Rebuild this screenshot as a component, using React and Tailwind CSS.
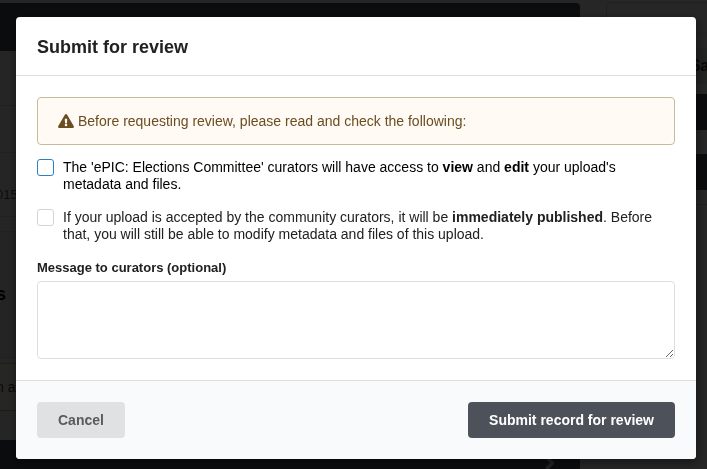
import { useState } from 'react';
import { ChevronRight } from 'lucide-react';

const WarningIcon = () => (
  <svg className="h-[14px] w-4 shrink-0" viewBox="0 0 576 512" fill="currentColor" aria-hidden="true">
    <path d="M569.517 440.013C587.975 472.007 564.806 512 527.94 512H48.054c-36.937 0-59.999-40.055-41.577-71.987L246.423 23.985c18.467-32.009 64.72-31.951 83.154 0l239.94 416.028zM288 354c-25.405 0-46 20.595-46 46s20.595 46 46 46 46-20.595 46-46-20.595-46-46-46zm-43.673-165.346l7.418 136c.347 6.364 5.609 11.346 11.982 11.346h48.546c6.373 0 11.635-4.982 11.982-11.346l7.418-136c.375-6.874-5.098-12.654-11.982-12.654h-63.383c-6.884 0-12.356 5.78-11.981 12.654z" />
  </svg>
);

const Checkbox = ({ id, checked, onChange, className, boxClassName, children }) => (
  <div className={`flex items-start gap-[9px] leading-[17px] ${className}`}>
    <input
      id={id}
      type="checkbox"
      checked={checked}
      onChange={onChange}
      className={`h-[17px] w-[17px] shrink-0 appearance-none rounded-[3px] border bg-white outline-none checked:bg-[#4d515a] ${boxClassName}`}
    />
    <label htmlFor={id}>{children}</label>
  </div>
);

// Upload form that stays visible behind the dimmer
const UploadPage = () => (
  <div className="flex h-screen overflow-hidden bg-white text-black" aria-hidden="true">
    <div className="flex w-[82%] shrink-0 flex-col pt-[3px]">
      <div className="h-12 shrink-0 rounded-tr bg-[#4d515a]" />
      <div className="flex grow flex-col bg-[#f8f8f8]">
        <div className="h-[55px] border-b border-[#d4d4d5]" />
        <div className="h-[47px] border-b border-[#d4d4d5]" />
        <div className="h-16 border-b border-[#d4d4d5] pt-[34px] text-[13px] leading-4 text-[#555]">
          <span className="-ml-1">0155</span>
        </div>
        <div className="mt-[14px] h-[127px] border-y border-[#d4d4d5] bg-[#eeeeee] pt-[50px] text-lg leading-6 font-bold">
          <span className="-ml-1">s</span>
        </div>
        <div className="mt-[5px] h-12 border-y border-[#c9ba9b] bg-[#fffaf3] pt-[15px] text-sm leading-4 text-[#573a08]">
          <span className="-ml-1">n a</span>
        </div>
      </div>
      <div className="flex h-[29px] shrink-0 items-end justify-end bg-[#4d515a] pr-5 text-[#e0e1e2]">
        <ChevronRight className="-mb-1 h-5 w-5" strokeWidth={4} />
      </div>
    </div>
    <div className="ml-[26px] flex grow flex-col">
      <div className="mt-[2px] h-[203px] rounded-tl border-b border-l border-t border-[#d4d4d5]">
        <div className="h-[31px] border-b border-[#e8e8e8]" />
        <div className="mt-[14px] flex h-9 items-center justify-end overflow-hidden bg-[#e0e8e6] text-base font-bold text-[#333]">
          <span className="-mr-5">Save</span>
        </div>
        <div className="mt-[10px] h-9 bg-[#4d515a]" />
        <div className="mt-6 h-9 bg-[#4d515a]" />
      </div>
    </div>
  </div>
);

const App = () => {
  const [access, setAccess] = useState(false);
  const [published, setPublished] = useState(false);
  const [message, setMessage] = useState('');

  return (
    <div className="font-['Liberation_Sans',Arial,sans-serif] text-sm">
      <UploadPage />

      <div className="fixed inset-0 overflow-hidden bg-black/85 pt-[17px] pr-[11px] pl-4">
        <div
          role="dialog"
          aria-modal="true"
          aria-labelledby="modal-title"
          className="overflow-hidden rounded bg-white shadow-[1px_3px_10px_1px_rgba(0,0,0,0.4)]"
        >
          <header className="border-b border-[#dedede] px-[21px] pt-[18px] pb-4">
            <h1 id="modal-title" className="text-lg leading-6 font-bold text-[#212121]">
              Submit for review
            </h1>
          </header>

          <div className="p-[21px] text-[#212121]">
            <div className="flex h-12 items-center gap-1 rounded border border-[#c9ba9b] bg-[#fffaf3] px-5 text-[#6b4d22]">
              <WarningIcon />
              <p>Before requesting review, please read and check the following:</p>
            </div>

            <Checkbox
              id="accept-access"
              checked={access}
              onChange={(e) => setAccess(e.target.checked)}
              className="mt-[14px] text-black"
              boxClassName="border-[#2f80c3]"
            >
              The 'ePIC: Elections Committee' curators will have access to <b>view</b> and <b>edit</b> your
              upload's metadata and files.
            </Checkbox>
            <Checkbox
              id="accept-publish"
              checked={published}
              onChange={(e) => setPublished(e.target.checked)}
              className="mt-4"
              boxClassName="border-[#d4d4d5]"
            >
              If your upload is accepted by the community curators, it will be <b>immediately published</b>.
              Before that, you will still be able to modify metadata and files of this upload.
            </Checkbox>

            <label htmlFor="message" className="mt-4 block text-[13px] leading-[18px] font-bold">
              Message to curators (optional)
            </label>
            <textarea
              id="message"
              value={message}
              onChange={(e) => setMessage(e.target.value)}
              className="mt-1 block h-[78px] w-full resize-y rounded border border-[#dedede] px-3 py-2 outline-none"
            />
          </div>

          <footer className="flex justify-between border-t border-[#dedede] bg-[#f9fafb] p-[21px] font-bold">
            <button type="button" className="h-9 rounded bg-[#e0e1e2] px-[21px] text-[#5a5a5a]">
              Cancel
            </button>
            <button type="button" className="h-9 rounded bg-[#4d515a] px-[21px] text-white">
              Submit record for review
            </button>
          </footer>
        </div>
      </div>
    </div>
  );
};

export default App;
